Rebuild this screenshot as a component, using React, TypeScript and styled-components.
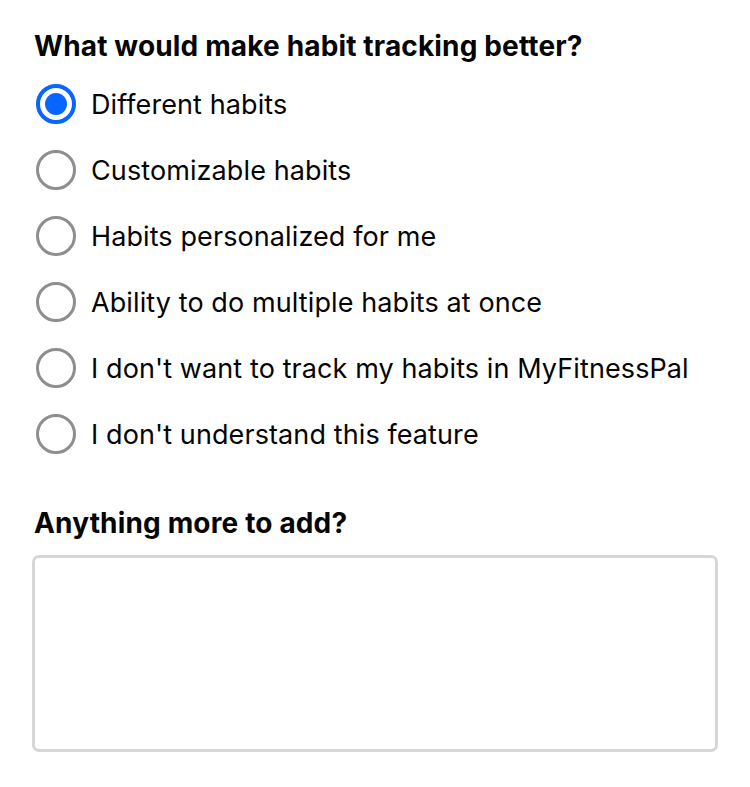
import React, { useState } from 'react';
import styled, { createGlobalStyle } from 'styled-components';

const GlobalStyle = createGlobalStyle`
  html, body {
    margin: 0;
    padding: 0;
    background: #ffffff;
  }
  body {
    font-family: Inter, "Liberation Sans", Arial, sans-serif;
    color: #050505;
  }
`;

const Page = styled.div`
  width: 750px;
  height: 787px;
  box-sizing: border-box;
  padding: 29px 32px 0 34px;
  display: flex;
  flex-direction: column;
`;

const Question = styled.h2`
  margin: 0;
  font-size: 28px;
  font-weight: 700;
  line-height: 34px;
  letter-spacing: 0.15px;
`;

const Options = styled.div`
  display: flex;
  flex-direction: column;
  margin-top: 8px;
`;

const OptionRow = styled.label`
  display: flex;
  align-items: center;
  gap: 15px;
  height: 66px;
  font-size: 27px;
  letter-spacing: 0.1px;
  cursor: pointer;
`;

const RadioCircle = styled.span<{ $checked: boolean }>`
  flex: none;
  width: 40px;
  height: 40px;
  box-sizing: border-box;
  border-radius: 50%;
  border: ${(p) => (p.$checked ? '4px solid #0866ff' : '3px solid #8e8e8e')};
  margin-left: 2px;
  display: flex;
  align-items: center;
  justify-content: center;
  &::after {
    content: '';
    width: 22px;
    height: 22px;
    border-radius: 50%;
    background: #0866ff;
    display: ${(p) => (p.$checked ? 'block' : 'none')};
  }
`;

const FeedbackLabel = styled(Question)`
  margin-top: 39px;
`;

const FeedbackBox = styled.textarea`
  margin-top: 15px;
  margin-left: -2px;
  width: 686px;
  height: 197px;
  box-sizing: border-box;
  border: 3px solid #d6d6d9;
  border-radius: 7px;
  resize: none;
  outline: none;
  padding: 12px;
  font-family: inherit;
  font-size: 20px;
`;

const options = [
  'Different habits',
  'Customizable habits',
  'Habits personalized for me',
  'Ability to do multiple habits at once',
  "I don't want to track my habits in MyFitnessPal",
  "I don't understand this feature",
];

const App = () => {
  const [selected, setSelected] = useState(0);
  return (
    <Page>
      <GlobalStyle />
      <Question>What would make habit tracking better?</Question>
      <Options>
        {options.map((o, i) => (
          <OptionRow key={o} onClick={() => setSelected(i)}>
            <RadioCircle $checked={selected === i} />
            <span>{o}</span>
          </OptionRow>
        ))}
      </Options>
      <FeedbackLabel>Anything more to add?</FeedbackLabel>
      <FeedbackBox />
    </Page>
  );
};

export default App;
